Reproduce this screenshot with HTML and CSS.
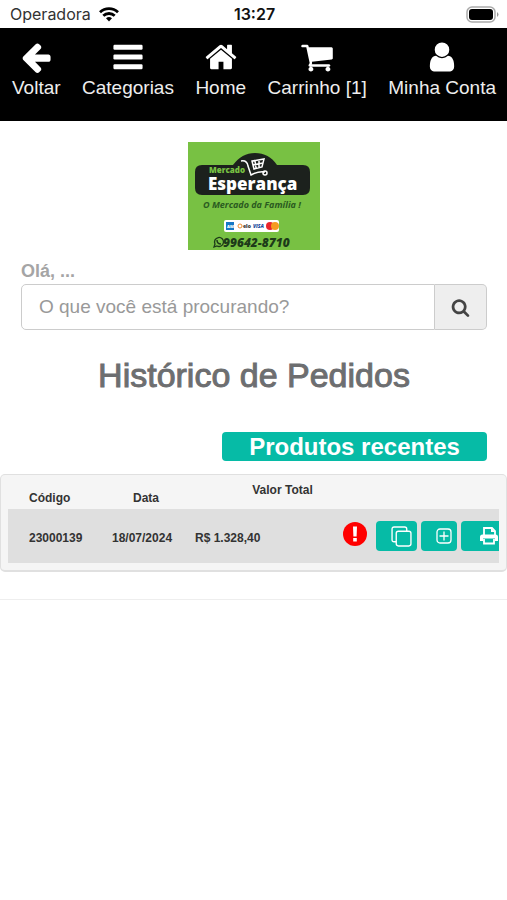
FILE: index.html
```
<!doctype html>
<html lang="pt-BR">
  <head>
    <meta charset="utf-8">
    <meta name="viewport" content="width=device-width, initial-scale=1">
    <title>Mercado Esperança - Histórico de Pedidos</title>
    <link rel="stylesheet" href="styles.css">
  </head>
  <body>
    <div class="status-bar">
      <div class="carrier">
        <span>Operadora</span>
        <svg width="20" height="15" viewBox="0 0 20 15" fill="none" stroke="#000" stroke-width="2.8">
          <path d="M1 5.2a13 13 0 0 1 18 0" />
          <path d="M4.3 8.8a8.2 8.2 0 0 1 11.4 0" />
          <path d="M10 14.6l-3-3.3a4.4 4.4 0 0 1 6 0z" fill="#000" stroke="none" />
        </svg>
      </div>
      <span class="clock">13:27</span>
      <svg class="battery" width="33" height="17" viewBox="0 0 33 17">
        <rect x="1" y="1" width="28" height="15" rx="5" fill="#fff" stroke="#aaa" stroke-width="1.5" />
        <rect x="3" y="3" width="24" height="11" rx="3" />
        <path d="M31 6q3 2.5 0 5z" fill="#999" />
      </svg>
    </div>

    <nav class="navbar">
      <a href="#">
        <svg viewBox="0 0 1792 1792"><path d="M1664 896v128q0 53-32.5 90.5t-84.5 37.5h-704l293 294q38 36 38 90t-38 90l-75 76q-37 37-90 37-52 0-91-37l-651-652q-37-37-37-90 0-52 37-91l651-650q38-38 91-38 52 0 90 38l75 74q38 38 38 91t-38 91l-293 293h704q52 0 84.5 37.5t32.5 90.5z" /></svg>
        Voltar
      </a>
      <a href="#">
        <svg viewBox="0 0 1792 1792">
          <rect x="128" y="256" width="1536" height="256" rx="64" />
          <rect x="128" y="768" width="1536" height="256" rx="64" />
          <rect x="128" y="1280" width="1536" height="256" rx="64" />
        </svg>
        Categorias
      </a>
      <a href="#">
        <svg viewBox="0 0 1792 1792"><path d="M1472 992v480q0 26-19 45t-45 19h-384v-384h-256v384h-384q-26 0-45-19t-19-45v-480q0-1 .5-3t.5-3l575-474 575 474q1 2 1 6zm223-69l-62 74q-8 9-21 11h-3q-13 0-21-7l-692-577-692 577q-12 8-24 7-13-2-21-11l-62-74q-8-10-7-23.5t11-21.5l719-599q32-26 76-26t76 26l244 204v-195q0-14 9-23t23-9h192q14 0 23 9t9 23v408l219 182q10 8 11 21.5t-7 23.5z" /></svg>
        Home
      </a>
      <a href="#">
        <svg viewBox="0 0 1792 1792"><path d="M704 1536q0 52-38 90t-90 38-90-38-38-90 38-90 90-38 90 38 38 90zm896 0q0 52-38 90t-90 38-90-38-38-90 38-90 90-38 90 38 38 90zm128-1088v512q0 24-16.5 42.5t-40.5 21.5l-1044 122q13 60 13 70 0 16-24 64h920q26 0 45 19t19 45-19 45-45 19h-1024q-26 0-45-19t-19-45q0-11 8-31.5t16-36 21.5-40 15.5-29.5l-177-823h-204q-26 0-45-19t-19-45 19-45 45-19h256q16 0 28.5 6.5t19.5 15.5 13 24.5 8 26 5.5 29.5 4.5 26h1201q26 0 45 19t19 45z" /></svg>
        Carrinho [1]
      </a>
      <a href="#">
        <svg viewBox="0 0 1792 1792"><path d="M1536 1399q0 109-62.5 187t-150.5 78h-854q-88 0-150.5-78t-62.5-187q0-85 8.5-160.5t31.5-152 58.5-131 94-89 134.5-34.5q131 128 313 128t313-128q76 0 134.5 34.5t94 89 58.5 131 31.5 152 8.5 160.5zm-256-887q0 159-112.5 271.5t-271.5 112.5-271.5-112.5-112.5-271.5 112.5-271.5 271.5-112.5 271.5 112.5 112.5 271.5z" /></svg>
        Minha Conta
      </a>
    </nav>

    <main>
      <svg class="logo" viewBox="0 0 132 108">
        <rect width="132" height="108" fill="#78c143" />
        <path d="M14 23h31c6-8 13-12 22-12s17 4 22 12h26q7 0 7 7v16q0 7-7 7H14q-7 0-7-7V30q0-7 7-7z" fill="#1c211d" />
        <!-- cart over the name -->
        <g fill="none" stroke="#fff" stroke-width="1.5">
          <path d="M53 19q6-1 7 5l3 9q7-4 14-3" />
          <path d="M64 19l12-2-2 8-8 2zM67 19l1 7M71 18v8M65 23l10-2" />
          <circle cx="77" cy="31" r="2" />
        </g>
        <text x="21" y="31" class="logo-top">Mercado</text>
        <text x="20" y="48" class="logo-name">Esperança</text>
        <text x="15" y="66" class="logo-slogan">O Mercado da Família !</text>
        <rect x="36" y="78" width="55" height="12" rx="2" fill="#fff" />
        <rect x="38" y="80" width="8" height="8" fill="#1677c5" />
        <text x="39" y="86" class="logo-card amex">AM</text>
        <circle cx="52" cy="84" r="2" fill="none" stroke="#e98b32" />
        <text x="55" y="86" class="logo-card">elo</text>
        <text x="65" y="86" class="logo-card visa">VISA</text>
        <circle cx="82" cy="84" r="4" fill="#e9252b" />
        <circle cx="87" cy="84" r="4" fill="#f59b21" />
        <g fill="none" stroke="#1d3b19">
          <path d="M26 105l1-3a4.5 4.5 0 1 1 2 2z" stroke-width="1.3" />
          <path d="M29 98q0 4 4 4" stroke-width="1.5" />
        </g>
        <text x="35" y="105" class="logo-phone">99642-8710</text>
      </svg>

      <div class="content">
        <label class="greeting" for="search">Olá, ...</label>
        <form class="search">
          <input type="text" id="search" placeholder="O que você está procurando?">
          <button type="button" aria-label="Buscar">
            <svg viewBox="0 0 1792 1792"><path d="M1216 832q0-185-131.5-316.5t-316.5-131.5-316.5 131.5-131.5 316.5 131.5 316.5 316.5 131.5 316.5-131.5 131.5-316.5zm512 832q0 52-38 90t-90 38q-54 0-90-38l-343-342q-179 124-399 124-143 0-273.5-55.5t-225-150-150-225-55.5-273.5 55.5-273.5 150-225 225-150 273.5-55.5 273.5 55.5 225 150 150 225 55.5 273.5q0 220-124 399l343 343q37 37 37 90z" /></svg>
          </button>
        </form>
        <h1>Histórico de Pedidos</h1>
        <button class="recent">Produtos recentes</button>
      </div>

      <div class="well">
        <div class="table-wrap">
          <table>
            <colgroup>
              <col class="col-code">
              <col class="col-date">
              <col class="col-total">
              <col class="col-alert">
              <col class="col-actions">
            </colgroup>
            <thead>
              <tr>
                <th class="code">Código</th>
                <th>Data</th>
                <th class="total" colspan="2">Valor Total</th>
                <th></th>
              </tr>
            </thead>
            <tbody>
              <tr>
                <td class="code">23000139</td>
                <td class="date">18/07/2024</td>
                <td class="value">R$ 1.328,40</td>
                <td>
                  <svg class="alert" viewBox="0 0 24 24">
                    <circle cx="12" cy="12" r="12" fill="#f00" />
                    <path d="M10 4.5h4l-.4 10h-3.2zM10.2 16h3.6v3.5h-3.6z" fill="#fff" />
                  </svg>
                </td>
                <td>
                  <div class="actions">
                    <button aria-label="Copiar pedido">
                      <svg class="copy" viewBox="0 0 20 20" stroke-width="1.3">
                        <path d="M5 15H3q-2 0-2-2V3q0-2 2-2h10q2 0 2 2v2" />
                        <rect x="5" y="5" width="14" height="14" rx="2" />
                      </svg>
                    </button>
                    <button aria-label="Adicionar">
                      <svg class="plus" viewBox="0 0 16 16" stroke-width="1.3">
                        <rect x="1" y="1" width="14" height="14" rx="3" />
                        <path d="M8 3.5v9M3.500 8h9" />
                      </svg>
                    </button>
                    <button class="print" aria-label="Imprimir">
                      <svg viewBox="0 0 18 18">
                        <path d="M4 8V1h8l3 3v4" fill="none" stroke="#fff" stroke-width="1.8" />
                        <path d="M11 1v4h4z" />
                        <path d="M2.500 7.500h13q2.500 0 2.500 2.500v4h-3v-2.500H3V14H0v-4q0-2.500 2.500-2.500z" />
                        <path d="M4 12v4.500h10V12" fill="none" stroke="#fff" stroke-width="1.8" />
                      </svg>
                    </button>
                  </div>
                </td>
              </tr>
            </tbody>
          </table>
        </div>
      </div>
      <hr>
    </main>
  </body>
</html>
```
FILE: styles.css
```
:root {
  --teal: #06bba6;
  --border: #ccc;
}

* {
  box-sizing: border-box;
}

body {
  margin: 0;
  background: #fff;
  color: #333;
  font-family: "Liberation Sans", Arial, sans-serif;
}

button {
  font-family: inherit;
  cursor: pointer;
}

.status-bar {
  display: grid;
  grid-template-columns: 1fr auto 1fr;
  align-items: center;
  height: 28px;
  padding: 0 8px 0 10px;
  font-family: Inter, sans-serif;
  font-size: 16px;
}

.carrier {
  display: flex;
  align-items: center;
  gap: 8px;
}

.clock {
  font-weight: 600;
  color: #111;
}

.battery {
  justify-self: end;
}

.navbar {
  display: flex;
  justify-content: space-between;
  padding: 12px 11px 21px 12px;
  background: #000;
}

.navbar a {
  display: flex;
  flex-direction: column;
  align-items: center;
  gap: 2px;
  color: #eee;
  font-size: 19px;
  line-height: 24px;
  text-decoration: none;
  white-space: nowrap;
}

.navbar svg {
  width: 34px;
  height: 34px;
  fill: #fff;
}

.logo {
  display: block;
  width: 132px;
  height: 108px;
  margin: 21px auto 9px;
}

.logo text {
  font-family: "Open Sans", sans-serif;
  font-weight: 800;
}

.logo .logo-top {
  font-size: 8px;
  fill: #78c143;
}

.logo .logo-name {
  font-size: 17px;
  fill: #fff;
}

.logo .logo-slogan {
  font-size: 9px;
  font-weight: 700;
  font-style: italic;
  fill: #2a5a20;
}

.logo .logo-card {
  font-size: 5px;
  fill: #333;
}

.logo .amex {
  font-size: 4px;
  fill: #fff;
}

.logo .visa {
  font-style: italic;
  fill: #1a4a9c;
}

.logo .logo-phone {
  font-size: 12px;
  font-style: italic;
  fill: #1d3b19;
}

.content {
  display: flex;
  flex-direction: column;
  padding: 0 20px 0 21px;
}

.greeting {
  color: #a5a5a5;
  font-size: 18px;
  font-weight: bold;
  line-height: 25px;
}

.search {
  display: flex;
  height: 46px;
}

.search input {
  flex: 1;
  min-width: 0;
  padding: 0 17px;
  border: 1px solid var(--border);
  border-radius: 5px 0 0 5px;
  font-family: inherit;
  font-size: 19px;
}

.search input::placeholder {
  color: #999;
}

.search button {
  width: 52px;
  padding: 4px 0 0;
  border: 1px solid var(--border);
  border-left: 0;
  border-radius: 0 5px 5px 0;
  background: #eee;
}

.search svg {
  width: 19px;
  height: 19px;
  fill: #444;
}

h1 {
  margin: 25px 0 36px;
  color: #6d6e70;
  font-size: 34px;
  font-weight: 500;
  line-height: 41px;
  text-align: center;
  -webkit-text-stroke: 1px #6d6e70;
}

.recent {
  align-self: flex-end;
  width: 265px;
  height: 29px;
  padding: 0;
  border: 0;
  border-radius: 4px;
  background: var(--teal);
  color: #fff;
  font-size: 24px;
  font-weight: bold;
  line-height: 29px;
}

.well {
  margin-top: 13px;
  padding: 7px;
  border: 1px solid #e0e0e0;
  border-bottom-width: 2px;
  border-radius: 5px;
  background: #f5f5f5;
}

.table-wrap {
  overflow: hidden;
}

table {
  width: 530px;
  border-collapse: collapse;
  table-layout: fixed;
  font-size: 12px;
  font-weight: bold;
}

.col-code {
  width: 95px;
}

.col-date {
  width: 86px;
}

.col-total {
  width: 154px;
}

.col-alert {
  width: 33px;
}

th,
td {
  padding: 0;
}

th {
  height: 27px;
  padding-top: 4px;
}

th.total {
  padding: 0 0 12px;
}

.code {
  padding-left: 21px;
  text-align: left;
}

.date {
  padding-left: 9px;
}

.value {
  padding-left: 6px;
}

tbody tr {
  height: 54px;
  background: #dfdfdf;
}

tbody td {
  padding-top: 4px;
}

.alert {
  display: block;
  width: 24px;
  height: 24px;
  margin-bottom: 8px;
}

.actions {
  display: flex;
  gap: 4px;
  margin-bottom: 4px;
}

.actions button {
  display: flex;
  align-items: center;
  height: 30px;
  padding: 0 5px 0 15px;
  border: 0;
  border-radius: 4px;
  background: var(--teal);
}

.actions svg {
  flex: none;
  width: 18px;
  height: 18px;
  fill: #fff;
}

.actions .copy,
.actions .plus {
  fill: none;
  stroke: #fff;
}

.actions .copy {
  width: 21px;
  height: 21px;
}

.actions .plus {
  width: 16px;
  height: 16px;
}

.actions .print {
  padding: 0 15px 0 19px;
}

hr {
  margin: 27px 0 0;
  border: 0;
  border-top: 1px solid #eee;
}
```
